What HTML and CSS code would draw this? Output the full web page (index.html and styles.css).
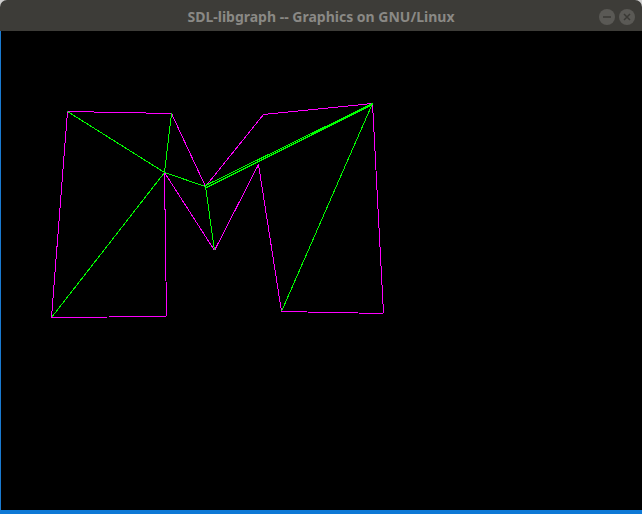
FILE: index.html
```html
<!DOCTYPE html>
<html>
<head>
<meta charset="utf-8">
<title>SDL-libgraph</title>
<link rel="stylesheet" href="styles.css">
</head>
<body>
<div class="window">
  <header class="titlebar">
    <span class="title">SDL-libgraph -- Graphics on GNU/Linux</span>
    <div class="controls">
      <span class="btn">
        <svg width="16" height="16" viewBox="0 0 16 16"><line x1="4" y1="8" x2="12" y2="8" stroke="#3a3935" stroke-width="1.5"/></svg>
      </span>
      <span class="btn">
        <svg width="16" height="16" viewBox="0 0 16 16"><path d="M5 5 L11 11 M11 5 L5 11" stroke="#3a3935" stroke-width="1.5"/></svg>
      </span>
    </div>
  </header>
  <main class="canvas">
    <svg class="drawing" width="641" height="479" viewBox="1 31 641 479">
      <g class="magenta">
        <line x1="67.5" y1="111.5" x2="171.5" y2="113.5"/>
        <line x1="67.5" y1="111.5" x2="51.5" y2="317.5"/>
        <line x1="51.5" y1="317.5" x2="166.5" y2="316.5"/>
        <line x1="166.5" y1="316.5" x2="164.5" y2="172.5"/>
        <line x1="171.5" y1="113.5" x2="205.5" y2="186.5"/>
        <line x1="164.5" y1="172.5" x2="214.5" y2="250.5"/>
        <line x1="214.5" y1="250.5" x2="258.5" y2="164.5"/>
        <line x1="205.5" y1="186.5" x2="263.5" y2="114.5"/>
        <line x1="263.5" y1="114.5" x2="372.5" y2="103.5"/>
        <line x1="372.5" y1="103.5" x2="383.5" y2="313.5"/>
        <line x1="383.5" y1="313.5" x2="281.5" y2="311.5"/>
        <line x1="281.5" y1="311.5" x2="258.5" y2="164.5"/>
      </g>
      <g class="green">
        <line x1="67.5" y1="111.5" x2="164.5" y2="172.5"/>
        <line x1="171.5" y1="113.5" x2="164.5" y2="172.5"/>
        <line x1="164.5" y1="172.5" x2="51.5" y2="317.5"/>
        <line x1="164.5" y1="172.5" x2="205.5" y2="186.5"/>
        <line x1="205.5" y1="186.5" x2="214.5" y2="250.5"/>
        <line x1="205.5" y1="185.5" x2="372.5" y2="103.5"/>
        <line x1="206.5" y1="187.5" x2="372.5" y2="104.5"/>
        <line x1="372.5" y1="103.5" x2="281.5" y2="311.5"/>
      </g>
    </svg>
  </main>
</div>
</body>
</html>
```
FILE: styles.css
```css
html, body {
  margin: 0;
  padding: 0;
  background: #cfcfcf;
}
.window {
  width: 642px;
  height: 514px;
  display: flex;
  flex-direction: column;
  overflow: hidden;
}
.titlebar {
  height: 31px;
  flex: none;
  background: #3d3c38;
  border-radius: 7px 7px 0 0;
  display: flex;
  align-items: center;
  justify-content: center;
  position: relative;
}
.title {
  font-family: "Noto Sans", "Open Sans", sans-serif;
  font-weight: bold;
  font-size: 14px;
  color: #8a8985;
  margin-top: 1px;
}
.controls {
  position: absolute;
  right: 7px;
  top: 9px;
  display: flex;
  gap: 4px;
}
.btn {
  width: 16px;
  height: 16px;
  border-radius: 50%;
  background: #5a5955;
  display: flex;
}
.canvas {
  flex: 1;
  background: #000;
  border-left: 1px solid #1a7ad0;
  border-bottom: 4px solid #0e79d6;
  display: flex;
}
.drawing {
  display: block;
}
.drawing line {
  stroke-width: 1;
  shape-rendering: crispEdges;
}
.magenta line {
  stroke: #ff00ff;
}
.green line {
  stroke: #00ff00;
}
```
